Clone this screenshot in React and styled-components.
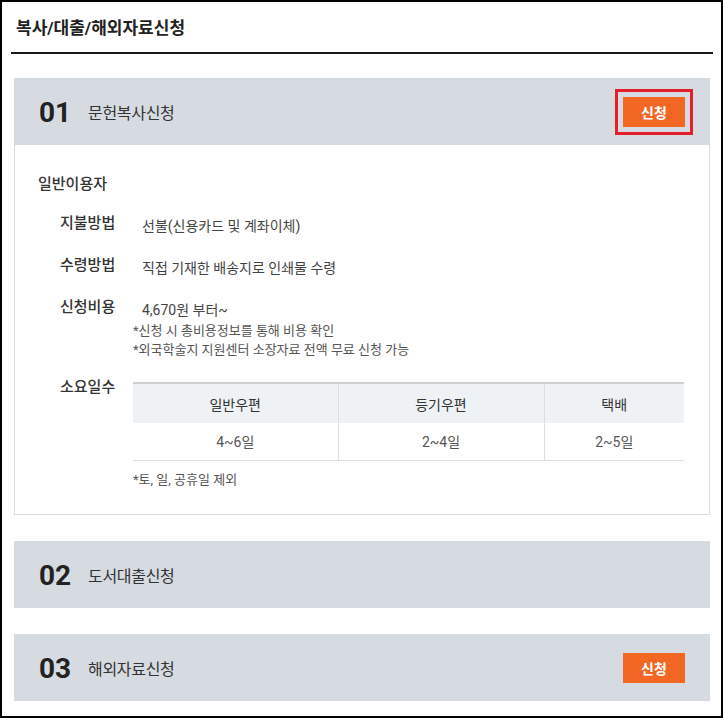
import React from 'react';
import styled, { createGlobalStyle } from 'styled-components';

const FONT = "Roboto, 'Noto Sans CJK KR', 'Noto Sans', sans-serif";

const GlobalStyle = createGlobalStyle`
  html, body { margin: 0; padding: 0; background: #fff; }
  body { font-family: ${FONT}; color: #333; }
  * { box-sizing: border-box; }
`;

const services = [
  { no: '01', title: '문헌복사신청', button: true, highlight: true, open: true },
  { no: '02', title: '도서대출신청' },
  { no: '03', title: '해외자료신청', button: true },
];

const deliveryTable = [
  { head: '일반우편', value: '4~6일' },
  { head: '등기우편', value: '2~4일' },
  { head: '택배', value: '2~5일' },
];

export default function App() {
  return (
    <>
      <GlobalStyle />
      <Frame>
        <PageTitle>복사/대출/해외자료신청</PageTitle>
        <PanelList>
          {services.map((s) => (
            <Panel key={s.no}>
              <PanelHead>
                <Num>{s.no}</Num>
                <PanelTitle>{s.title}</PanelTitle>
                {s.button && <ApplyButton $highlight={s.highlight}>신청</ApplyButton>}
              </PanelHead>
              {s.open && (
                <PanelBody>
                  <GroupTitle>일반이용자</GroupTitle>
                  <InfoGrid>
                    <Label>지불방법</Label>
                    <Value>선불(신용카드 및 계좌이체)</Value>

                    <Label>수령방법</Label>
                    <Value>직접 기재한 배송지로 인쇄물 수령</Value>

                    <Label>신청비용</Label>
                    <div>
                      <Value>4,670원 부터~</Value>
                      <Note>*신청 시 총비용정보를 통해 비용 확인</Note>
                      <Note>*외국학술지 지원센터 소장자료 전액 무료 신청 가능</Note>
                    </div>

                    <Label>소요일수</Label>
                    <div>
                      <DayTable>
                        <colgroup>
                          <col style={{ width: '205px' }} />
                          <col style={{ width: '206px' }} />
                          <col />
                        </colgroup>
                        <thead>
                          <tr>
                            {deliveryTable.map((d) => <th key={d.head}>{d.head}</th>)}
                          </tr>
                        </thead>
                        <tbody>
                          <tr>
                            {deliveryTable.map((d) => <td key={d.head}>{d.value}</td>)}
                          </tr>
                        </tbody>
                      </DayTable>
                      <TableNote>*토, 일, 공휴일 제외</TableNote>
                    </div>
                  </InfoGrid>
                </PanelBody>
              )}
            </Panel>
          ))}
        </PanelList>
      </Frame>
    </>
  );
}

/* ---------------- Styled Components ---------------- */

const Frame = styled.div`
  width: 723px;
  height: 718px;
  border: 2px solid #000;
  padding: 0 8px 0 9px;
  overflow: hidden;
`;

const PageTitle = styled.h1`
  margin: 0;
  padding: 15px 5px 0 5px;
  height: 52px;
  border-bottom: 2px solid #1a1a1a;
  font-size: 17px;
  font-weight: 700;
  line-height: 22px;
  color: #222;
`;

const PanelList = styled.div`
  display: flex;
  flex-direction: column;
  gap: 26px;
  padding: 24px 3px 0 3px;
`;

const Panel = styled.section`
  display: flex;
  flex-direction: column;
`;

const PanelHead = styled.div`
  display: flex;
  align-items: center;
  height: 67px;
  padding: 0 25px;
  background: #d6dae1;
`;

const Num = styled.span`
  font-family: Roboto, sans-serif;
  font-size: 28px;
  font-weight: 700;
  color: #222;
  width: 49px;
  line-height: 1;
  margin-top: 2px;
`;

const PanelTitle = styled.h2`
  margin: 0;
  flex: 1;
  font-size: 16px;
  font-weight: 400;
  color: #333;
  letter-spacing: -0.3px;
`;

const ApplyButton = styled.button`
  width: 62px;
  height: 30px;
  border: 0;
  padding: 0;
  background: #f26724;
  color: #fff;
  font-family: ${FONT};
  font-size: 14px;
  font-weight: 700;
  cursor: pointer;
  outline: ${(p) => (p.$highlight ? '3px solid #e51f2a' : 'none')};
  outline-offset: 5px;
`;

const PanelBody = styled.div`
  border: 1px solid #dcdcdc;
  border-top: 0;
  padding: 28px 25px 0 23px;
  height: 370px;
`;

const GroupTitle = styled.h3`
  margin: 0 0 17px;
  font-size: 15px;
  font-weight: 500;
  line-height: 22px;
  color: #333;
`;

const InfoGrid = styled.div`
  display: grid;
  grid-template-columns: 73px 1fr;
  row-gap: 17px;
  padding-left: 22px;
`;

const Label = styled.div`
  font-size: 15px;
  font-weight: 500;
  line-height: 22px;
  color: #333;
`;

const Value = styled.div`
  padding: 3px 0 0 9px;
  font-size: 14px;
  line-height: 22px;
  color: #444;
`;

const Note = styled.div`
  font-size: 13px;
  line-height: 19px;
  color: #555;
`;

const DayTable = styled.table`
  width: 551px;
  border-collapse: collapse;
  table-layout: fixed;
  margin-top: 6px;
  font-size: 14px;
  text-align: center;
  color: #444;

  thead tr {
    border-top: 2px solid #cfcfcf;
  }

  th {
    height: 40px;
    background: #eff2f4;
    font-weight: 400;
    color: #333;
  }

  td {
    height: 37px;
    border-bottom: 1px solid #dedede;
    color: #555;
  }

  th + th, td + td {
    border-left: 1px solid #dedede;
  }
`;

const TableNote = styled.div`
  margin-top: 9px;
  font-size: 13px;
  line-height: 20px;
  color: #555;
`;
